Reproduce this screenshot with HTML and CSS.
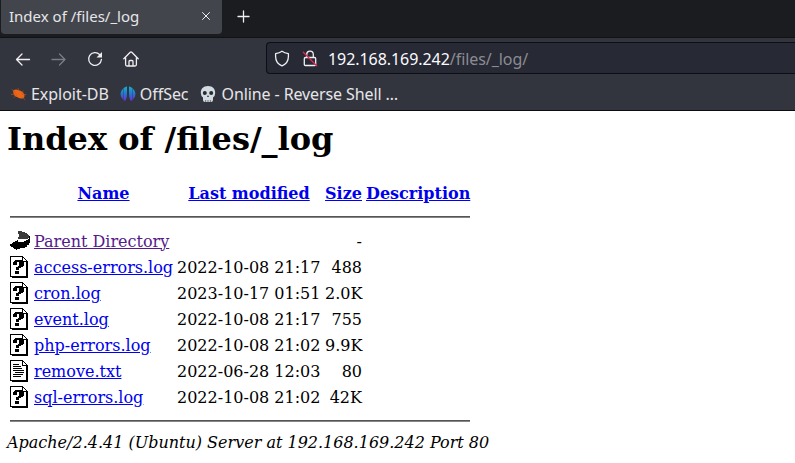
FILE: index.html
```html
<!DOCTYPE html>
<html lang="en">
<head>
<meta charset="utf-8">
<title>Index of /files/_log</title>
<link rel="stylesheet" href="styles.css">
</head>
<body>
<svg class="defs" width="0" height="0">
  <symbol id="unknown" viewBox="0 0 20 22" shape-rendering="crispEdges">
    <path d="M.5 .5H12.500L16.500 4.500V20.500H.5Z" fill="#fff" stroke="#000"/>
    <path d="M12.500 .5V5.500H16.500M17.500 5V21.500H2" fill="none" stroke="#000"/>
    <path d="M3 9V6H4V5H5V4H12V5H13V6H14V10H13V11H11V12H9V14H6V11H8V10H9V6H7V9ZM5 15H9V18H5Z" fill="#000"/>
  </symbol>
  <symbol id="text" viewBox="0 0 20 22" shape-rendering="crispEdges">
    <path d="M.5 .5H12.500L16.500 4.500V20.500H.5Z" fill="#fff" stroke="#000"/>
    <path d="M12.500 .5V5.500H16.500M17.500 5V21.500H2M3 4.500H9M3 6.500H11M3 8.500H12M3 10.500H14M5 12.500H14M3 14.500H13M3 16.500H11" fill="none" stroke="#000"/>
  </symbol>
</svg>
<header class="chrome">
  <div class="tabs">
    <div class="tab"><span>Index of /files/_log</span>
      <svg width="10" height="10" viewBox="0 0 10 10"><path d="M1.500 1.500L8.500 8.500M8.500 1.500L1.500 8.500"/></svg></div>
    <svg class="plus" width="13" height="13" viewBox="0 0 13 13"><path d="M6.500 1V12M1 6.500H12"/></svg>
  </div>
  <div class="toolbar">
    <div class="nav">
      <svg width="16" height="16" viewBox="0 0 16 16"><path d="M14.500 8.500H1.500M7 3L1.500 8.500L7 14"/></svg>
      <svg class="dim" width="16" height="16" viewBox="0 0 16 16"><path d="M1 8.500H14M8.500 3L14 8.500L8.500 14"/></svg>
      <svg width="16" height="16" viewBox="0 0 16 16"><path d="M12.600 3.500A6.400 6.400 0 1 0 14.400 8.500"/><path class="solid" d="M15 1V6.500H9.500Z"/></svg>
      <svg width="16" height="16" viewBox="0 0 16 16"><path d="M.8 7.800L7.200 1.300Q8 .7 8.800 1.300L15.200 7.800M2.600 6.500V13.500Q2.600 15 4 15H12Q13.400 15 13.400 13.500V6.500M6 15V10.500Q6 9.500 7 9.500H9Q10 9.500 10 10.500V15"/></svg>
    </div>
    <div class="address-bar">
      <svg width="16" height="17" viewBox="0 0 16 17"><path d="M8 1.200Q10.500 3 14.400 3.700V6.500C14.400 11 12 14.200 8 15.800C4 14.200 1.600 11 1.600 6.500V3.700Q5.500 3 8 1.200Z"/></svg>
      <svg class="lock" width="16" height="17" viewBox="0 0 16 17"><path d="M4.700 7.500V4.700C4.700 0 11.300 0 11.300 4.700V7.500M3.500 7.500H12.500Q13.700 7.500 13.700 8.700V14.300Q13.700 15.500 12.500 15.500H3.500Q2.300 15.500 2.300 14.300V8.700Q2.300 7.500 3.500 7.500Z"/><path class="slash" d="M1.300 2.300L14.700 15.700"/></svg>
      <span class="url">192.168.169.242<span>/files/_log/</span></span>
    </div>
  </div>
  <nav class="bookmarks">
    <a class="edb"><svg width="16" height="16" viewBox="0 0 16 16"><path class="bug" d="M2 4.500Q5 3 7 4L10 5Q13 6.500 13.500 9Q14 11.500 12 12.500Q9 13 6 11Q2.500 9.500 2.500 7.500Z"/><path class="legs" d="M1 3.500L4 6M7 2.500L8 5M12 5L11 7M15 8.500L11 8.500M0 8.500L5 8M3 11.500L6 9M14 13.500L11 11"/></svg>Exploit-DB</a>
    <a class="offsec"><svg width="16" height="16" viewBox="0 0 16 16"><defs><linearGradient id="blue" gradientUnits="userSpaceOnUse" x1="0" y1="0" x2="0" y2="16"><stop offset="0" stop-color="#14b5c9"/><stop offset=".5" stop-color="#2774d0"/><stop offset="1" stop-color="#7024d3"/></linearGradient></defs><path d="M3 2.800V13.200Q.5 11 .5 8T3 2.800ZM3.400 2.200Q5.500 .7 7 .5V8Q7 13 5 15L3.400 14ZM9 .5Q10.500 .7 12.600 2.200V14L11 15Q9 13 9 8ZM13 2.800Q15.500 5 15.500 8T13 13.200Z"/></svg>OffSec</a>
    <a class="shell"><svg width="16" height="16" viewBox="0 0 16 16"><path class="skull" d="M8 0C3 0 .8 3 .8 7Q.8 10 3 11.500V14Q3 16 5 16H11Q13 16 13 14V11.500Q15.200 10 15.200 7C15.200 3 13 0 8 0Z"/><path class="holes" d="M2.800 7A2 2 0 1 1 6.800 7A2 2 0 1 1 2.800 7ZM9.200 7A2 2 0 1 1 13.200 7A2 2 0 1 1 9.200 7ZM8 9L9 11H7ZM5.500 14H6.100V16H5.500ZM7.700 14H8.300V16H7.700ZM9.900 14H10.500V16H9.900Z"/></svg>Online - Reverse Shell …</a>
  </nav>
</header>
<main>
  <h1>Index of /files/_log</h1>
  <table>
    <colgroup><col class="c-icon"><col class="c-name"><col class="c-date"><col class="c-size"><col class="c-desc"></colgroup>
    <tr class="head"><th></th><th><a>Name</a></th><th><a>Last modified</a></th><th><a>Size</a></th><th><a>Description</a></th></tr>
    <tr><th colspan="5"><hr></th></tr>
    <tr><td><svg width="20" height="22" viewBox="0 0 20 22" shape-rendering="crispEdges"><path fill="#3a3a3a" d="M8 1H12V2H15V3H17V4H18V5H19V8H18V9H8V7H9V4H8Z"/><path d="M20 6V13H19V15H17V17H15V18H10V19H7V20H6V19H4V18H3V17H1V16H0V14H2V13H3V12H5V11H7V10H8V12H14V11H16V10H18V9H19V6Z"/></svg></td><td><a class="visited">Parent Directory</a></td><td></td><td class="size">-</td><td></td></tr>
    <tr><td><svg width="20" height="22"><use href="#unknown"/></svg></td><td><a>access-errors.log</a></td><td>2022-10-08 21:17</td><td class="size">488</td><td></td></tr>
    <tr><td><svg width="20" height="22"><use href="#unknown"/></svg></td><td><a>cron.log</a></td><td>2023-10-17 01:51</td><td class="size">2.0K</td><td></td></tr>
    <tr><td><svg width="20" height="22"><use href="#unknown"/></svg></td><td><a>event.log</a></td><td>2022-10-08 21:17</td><td class="size">755</td><td></td></tr>
    <tr><td><svg width="20" height="22"><use href="#unknown"/></svg></td><td><a>php-errors.log</a></td><td>2022-10-08 21:02</td><td class="size">9.9K</td><td></td></tr>
    <tr><td><svg width="20" height="22"><use href="#text"/></svg></td><td><a>remove.txt</a></td><td>2022-06-28 12:03</td><td class="size">80</td><td></td></tr>
    <tr><td><svg width="20" height="22"><use href="#unknown"/></svg></td><td><a>sql-errors.log</a></td><td>2022-10-08 21:02</td><td class="size">42K</td><td></td></tr>
    <tr><th colspan="5"><hr></th></tr>
  </table>
  <address>Apache/2.4.41 (Ubuntu) Server at 192.168.169.242 Port 80</address>
</main>
</body>
</html>
```
FILE: styles.css
```css
* { box-sizing: border-box; }
body { margin: 0; background: #fff; color: #000; font: 16px/19px "DejaVu Serif", serif; overflow: hidden; }
svg { display: block; flex: none; }
.defs { position: absolute; }

.chrome { height: 111px; background: #33353e; border-bottom: 1px solid #0c0c11; color: #e6e6e9; font: 16px/22px "Noto Sans", sans-serif; white-space: nowrap; }
.chrome svg { fill: none; stroke: #f0f0f2; stroke-width: 1.3; stroke-linecap: round; stroke-linejoin: round; }
.tabs { height: 38px; display: flex; background: #1b1c20; border-bottom: 1px solid #111216; }
.tab { width: 221px; height: 34px; margin-left: 1px; padding: 0 11px 2px 8px; display: flex; align-items: center; justify-content: space-between; background: #43454c; border-radius: 0 0 4px 4px; font-size: 15px; }
.chrome .tab svg { stroke-width: 1; }
.plus { margin: 10px 0 0 15px; }
.toolbar { height: 41px; padding-top: 4px; display: flex; }
.nav { width: 266px; padding: 9px 0 0 15px; display: flex; gap: 20px; }
.nav .dim { opacity: .38; }
.chrome .solid { fill: #f0f0f2; stroke: none; }
.address-bar { flex: 1; height: 32px; padding-left: 7px; display: flex; align-items: center; background: #272934; border: 1px solid #0d0e13; border-right: 0; border-radius: 4px 0 0 4px; }
.lock { margin-left: 12px; }
.chrome .slash { stroke: #e22850; }
.url { margin-left: 10px; padding-top: 2px; color: #fbfbfe; letter-spacing: -.06px; }
.url span { color: #8b8c92; }
.bookmarks { height: 29px; padding-left: 11px; display: flex; align-items: center; }
.bookmarks a { display: flex; align-items: center; gap: 4px; margin-right: 11px; letter-spacing: -.04px; }
.chrome .bug { fill: #ee6514; stroke: none; }
.chrome .legs { stroke: #ba5728; stroke-width: .6; }
.chrome .offsec path, .chrome .skull, .chrome .holes { stroke: none; }
.chrome .offsec path { fill: url(#blue); }
.chrome .skull { fill: #d2dbe0; }
.chrome .holes { fill: #262a33; }
.bookmarks .shell { gap: 6px; letter-spacing: -.1px; }

main { padding: 10px 7px 0; }
h1 { margin: 0 0 21px; font-size: 32px; line-height: 37px; }
table { width: 466px; table-layout: fixed; border-spacing: 2px; }
th, td { padding: 1px; white-space: nowrap; vertical-align: middle; }
.head { height: 24px; }
.c-icon { width: 22px; }
.c-name { width: 141px; }
.c-date { width: 146px; }
.c-size { width: 39px; }
.c-desc { width: 106px; }
.size { text-align: right; }
a { color: #0000ee; text-decoration: underline; }
.visited { color: #551a8b; }
.bookmarks a { color: inherit; text-decoration: none; }
hr { height: 2px; margin: 8px 0; border: 0; border-top: 1px solid #555; border-bottom: 1px solid #858585; }
address { font-style: italic; }
```
